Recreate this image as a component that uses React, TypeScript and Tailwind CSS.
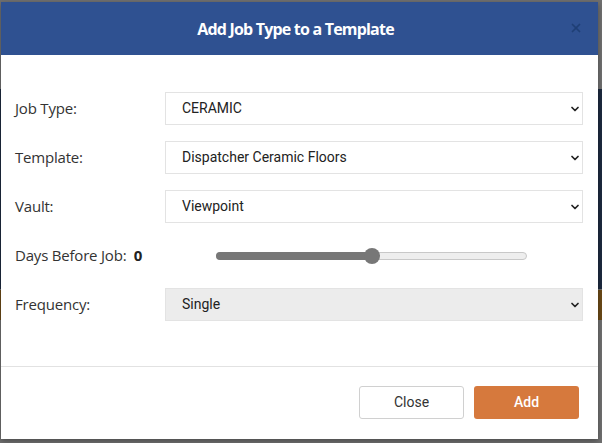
import { ChevronDown, X } from "lucide-react";

const rows = [
  { label: "Job Type:", value: "CERAMIC" },
  { label: "Template:", value: "Dispatcher Ceramic Floors" },
  { label: "Vault:", value: "Viewpoint" },
];

const labelFont = "font-['Open_Sans',sans-serif] text-[15px] tracking-[-0.2px] text-[#333]";

function SelectBox({ value, muted }: { value: string; muted?: boolean }) {
  return (
    <div
      className={`flex h-[33px] w-[418px] items-center justify-between border border-[#e3e3e3] pl-[16px] pr-[1px] font-['Roboto',sans-serif] text-[14px] text-[#222] ${
        muted ? "bg-[#ececec]" : "bg-white"
      }`}
    >
      <span>{value}</span>
      <ChevronDown className="h-[12px] w-[12px] text-[#222]" strokeWidth={3.5} />
    </div>
  );
}

export default function App() {
  const pct = 50;
  return (
    <div className="relative h-[443px] w-[602px] overflow-hidden bg-[#707070]">
      {/* page behind the backdrop */}
      <div className="absolute left-0 right-0 top-[89px] h-[200px] bg-[#1d2a3f]" />
      <div className="absolute left-0 right-0 top-[290px] h-[30px] bg-[#6b4a17]" />
      <div className="absolute left-0 right-0 top-[320px] h-[123px] bg-[#707070]" />

      <div className="absolute left-[1px] top-[2px] flex h-[437px] w-[597px] flex-col bg-white shadow-[0_2px_6px_rgba(0,0,0,0.35)]">
        <div className="relative flex h-[53px] shrink-0 items-center justify-center bg-[#2f5191]">
          <h1 className="pr-[8px] font-['Open_Sans',sans-serif] text-[16px] font-bold tracking-[-0.8px] text-white">
            Add Job Type to a Template
          </h1>
          <X className="absolute right-[15px] top-[19px] h-[14px] w-[14px] text-[#1f3f75]" strokeWidth={3} />
        </div>

        <div className="flex flex-1 flex-col gap-[16px] pl-[14px] pt-[37px]">
          {rows.map((r) => (
            <div key={r.label} className="flex items-center">
              <span className={`w-[150px] ${labelFont}`}>{r.label}</span>
              <SelectBox value={r.value} />
            </div>
          ))}

          <div className="flex h-[33px] items-center">
            <span className={`w-[150px] ${labelFont}`}>
              Days Before Job:&nbsp; <b className="font-bold text-[#222]">0</b>
            </span>
            <div className="relative ml-[51px] h-[8px] w-[311px] rounded-full border border-[#c8c8c8] bg-[#eeeeee]">
              <div
                className="absolute -left-px -top-px h-[8px] rounded-full bg-[#777]"
                style={{ width: `${pct}%` }}
              />
              <div
                className="absolute top-1/2 h-[16px] w-[16px] -translate-x-1/2 -translate-y-1/2 rounded-full bg-[#777]"
                style={{ left: `${pct}%` }}
              />
            </div>
          </div>

          <div className="flex items-center">
            <span className={`w-[150px] ${labelFont}`}>Frequency:</span>
            <SelectBox value="Single" muted />
          </div>
        </div>

        <div className="flex h-[73px] shrink-0 items-start justify-end gap-[10px] border-t border-[#e2e2e2] pr-[19px] pt-[19px] font-['Roboto',sans-serif] text-[14px]">
          <button className="h-[33px] w-[105px] rounded-[3px] border border-[#d0d0d0] bg-white text-[#333]">
            Close
          </button>
          <button className="h-[33px] w-[105px] rounded-[3px] bg-[#d6793d] font-medium text-white">
            Add
          </button>
        </div>
      </div>
    </div>
  );
}
